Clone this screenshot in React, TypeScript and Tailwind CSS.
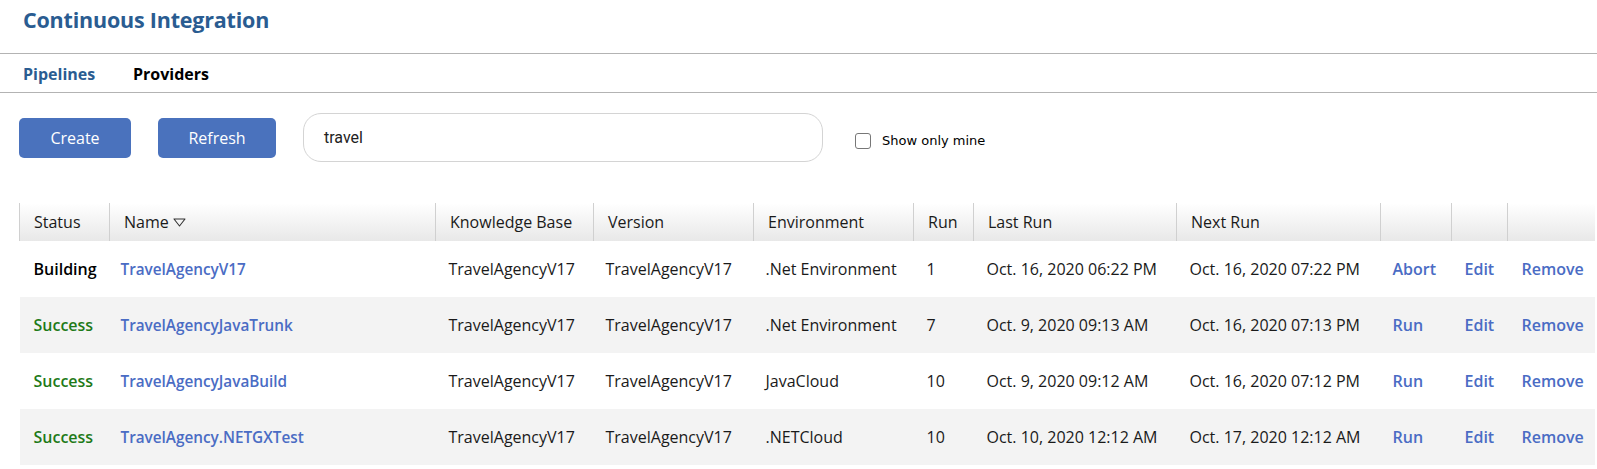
import React from "react";

type Row = {
  status: "Building" | "Success";
  name: string;
  kb: string;
  version: string;
  env: string;
  run: string;
  last: string;
  next: string;
  action: string;
};

const rows: Row[] = [
  { status: "Building", name: "TravelAgencyV17", kb: "TravelAgencyV17", version: "TravelAgencyV17", env: ".Net Environment", run: "1", last: "Oct. 16, 2020 06:22 PM", next: "Oct. 16, 2020 07:22 PM", action: "Abort" },
  { status: "Success", name: "TravelAgencyJavaTrunk", kb: "TravelAgencyV17", version: "TravelAgencyV17", env: ".Net Environment", run: "7", last: "Oct. 9, 2020 09:13 AM", next: "Oct. 16, 2020 07:13 PM", action: "Run" },
  { status: "Success", name: "TravelAgencyJavaBuild", kb: "TravelAgencyV17", version: "TravelAgencyV17", env: "JavaCloud", run: "10", last: "Oct. 9, 2020 09:12 AM", next: "Oct. 16, 2020 07:12 PM", action: "Run" },
  { status: "Success", name: "TravelAgency.NETGXTest", kb: "TravelAgencyV17", version: "TravelAgencyV17", env: ".NETCloud", run: "10", last: "Oct. 10, 2020 12:12 AM", next: "Oct. 17, 2020 12:12 AM", action: "Run" },
];

const widths = [90, 326, 158, 160, 160, 60, 203, 204, 71, 56, 87];
const headers = ["Status", "Name", "Knowledge Base", "Version", "Environment", "Run", "Last Run", "Next Run", "", "", ""];

export default function App() {
  return (
    <div className="w-[1597px] h-[469px] bg-white text-[#1a1a1a] overflow-hidden" style={{ fontFamily: '"Open Sans", "Noto Sans", sans-serif' }}>
      <div className="h-[53px] pl-[23px] pt-[4px]">
        <h1 className="text-[21.5px] font-bold text-[#2a5c91] tracking-[-0.2px]">Continuous Integration</h1>
      </div>
      <div className="border-t border-[#b3b3b3]" />
      <div className="h-[38px] flex items-center pl-[23px] pt-[2px] text-[16px] font-bold">
        <span className="text-[#2a5c91] w-[110px]">Pipelines</span>
        <span className="text-black">Providers</span>
      </div>
      <div className="border-t border-[#b3b3b3]" />
      <div className="flex items-center pl-[19px] pt-[20px]">
        <button className="w-[112px] h-[40px] rounded-[5px] bg-[#4a72bd] text-white text-[16px]">Create</button>
        <button className="ml-[27px] w-[118px] h-[40px] rounded-[5px] bg-[#4a72bd] text-white text-[16px]">Refresh</button>
        <div className="ml-[27px] w-[520px] h-[49px] rounded-[18px] border border-[#d4d4d4] flex items-center pl-[20px] text-[16px] text-[#222]" style={{ fontFamily: "Roboto, sans-serif" }}>
          travel
        </div>
        <div className="ml-[32px] mt-[6px] flex items-center">
          <div className="w-[16px] h-[16px] rounded-[3px] border border-[#777] bg-white" />
          <span className="ml-[11px] text-[13px] text-black" style={{ fontFamily: '"DejaVu Sans", Verdana, sans-serif' }}>Show only mine</span>
        </div>
      </div>
      <div className="mt-[41px] pl-[19px] pr-[3px]">
        <table className="w-full table-fixed border-collapse text-[16px]">
          <colgroup>
            {widths.map((w, i) => (
              <col key={i} style={{ width: w }} />
            ))}
          </colgroup>
          <thead>
            <tr className="h-[38px] bg-gradient-to-b from-white to-[#e8e8e8]">
              {headers.map((h, i) => (
                <th key={i} className="border-l border-[#d0d0d0] text-left font-normal pl-[14px] whitespace-nowrap">
                  {h}
                  {h === "Name" && (
                    <svg className="inline-block ml-[4px] mb-[2px]" width="13" height="9" viewBox="0 0 13 9">
                      <path d="M1 1 H12 L6.5 8 Z" fill="none" stroke="#333" strokeWidth="1.1" strokeLinejoin="round" />
                    </svg>
                  )}
                </th>
              ))}
            </tr>
          </thead>
          <tbody>
            {rows.map((r, i) => (
              <tr key={i} className={`h-[56px] ${i % 2 === 1 ? "bg-[#f3f3f3]" : "bg-white"}`}>
                <td className={`pl-[14px] font-semibold ${r.status === "Success" ? "text-[#1e7a18]" : "text-black"}`}>{r.status}</td>
                <td className="pl-[11px] text-[15.3px] font-semibold text-[#4a6cc4] whitespace-nowrap">{r.name}</td>
                <td className="pl-[13px] whitespace-nowrap">{r.kb}</td>
                <td className="pl-[12px] whitespace-nowrap">{r.version}</td>
                <td className="pl-[12px] whitespace-nowrap">{r.env}</td>
                <td className="pl-[13px]">{r.run}</td>
                <td className="pl-[13px] whitespace-nowrap">{r.last}</td>
                <td className="pl-[13px] whitespace-nowrap">{r.next}</td>
                <td className="pl-[12px] font-semibold text-[#4a6cc4]">{r.action}</td>
                <td className="pl-[13px] font-semibold text-[#4a6cc4]">Edit</td>
                <td className="pl-[14px] font-semibold text-[#4a6cc4]">Remove</td>
              </tr>
            ))}
          </tbody>
        </table>
      </div>
    </div>
  );
}
